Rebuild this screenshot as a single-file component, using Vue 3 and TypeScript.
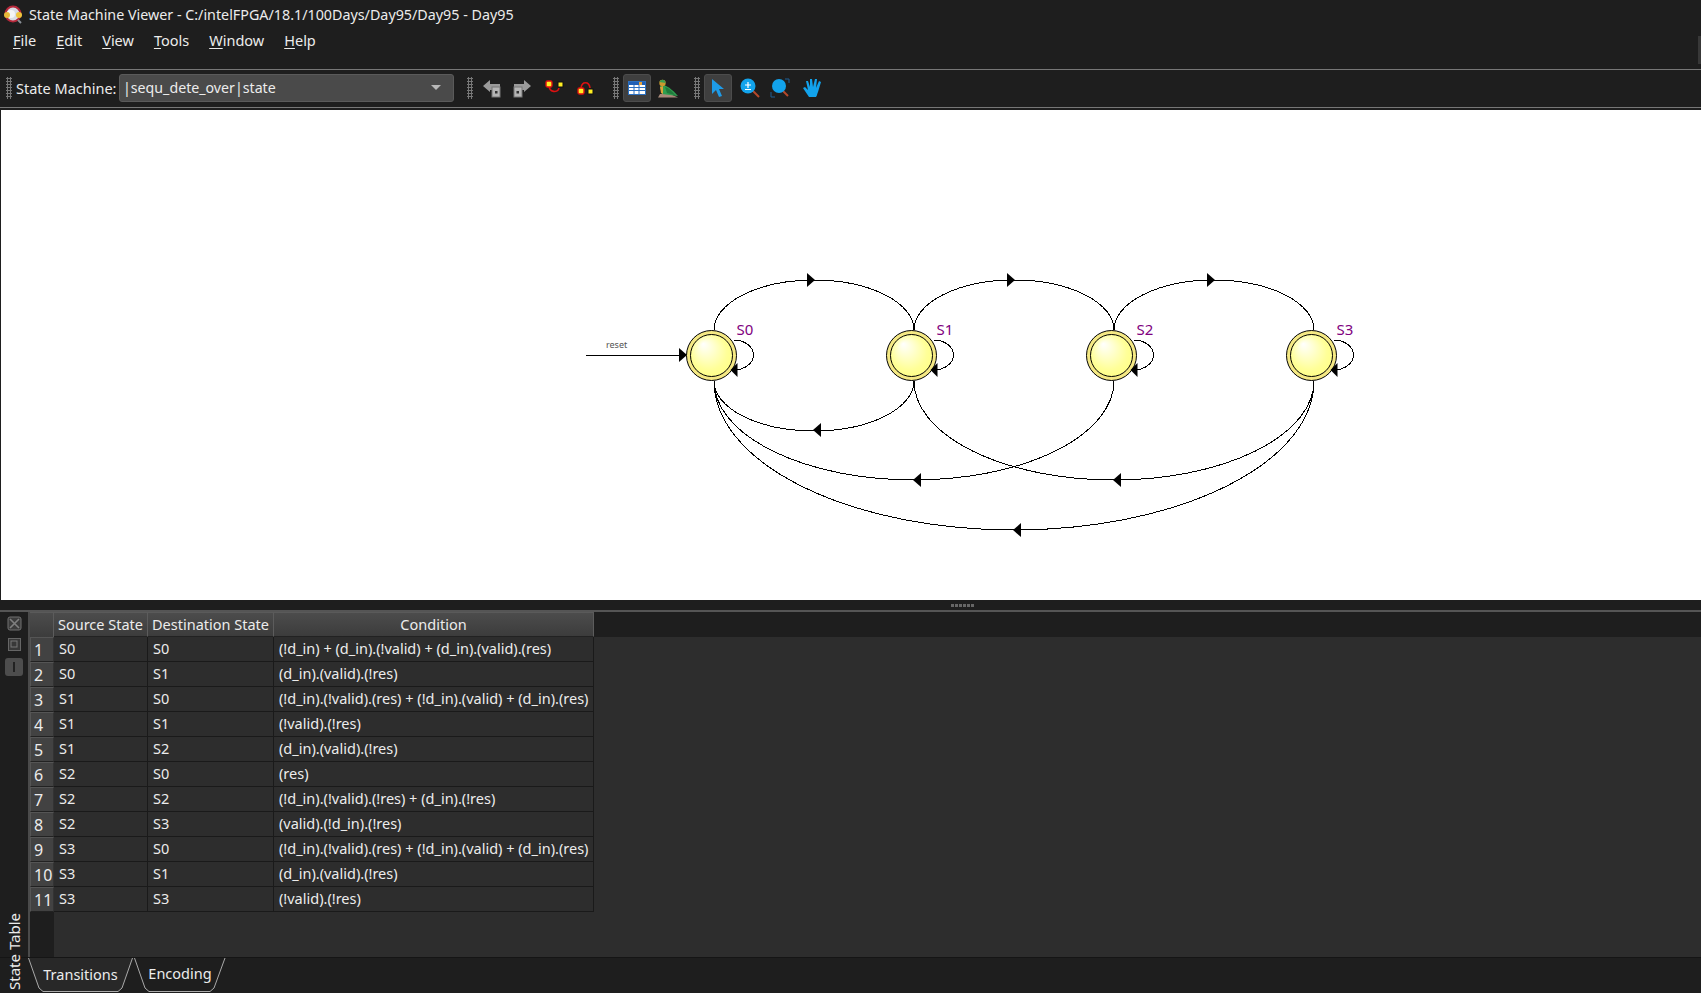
<template>
  <div class="viewer">
    <div class="titlebar">
      <svg class="app-icon" width="20" height="22" viewBox="0 0 20 22">
        <circle cx="11" cy="11" r="7.5" fill="#d8dce4" stroke="#b5283a" stroke-width="2" />
        <circle cx="9" cy="11" r="4" fill="#f4f4f4" />
        <circle cx="5" cy="12" r="3" fill="#e8b93a" />
        <circle cx="17" cy="12" r="3" fill="#f0c43c" />
        <path d="M16 17l3 3" stroke="#8a8f96" stroke-width="2" />
      </svg>
      <span>State Machine Viewer - C:/intelFPGA/18.1/100Days/Day95/Day95 - Day95</span>
    </div>

    <nav class="menubar">
      <span v-for="m in menus" :key="m" class="menu-item"><u>{{ m[0] }}</u>{{ m.slice(1) }}</span>
      <span class="menu-handle"></span>
    </nav>

    <div class="toolbar">
      <span class="grip first"></span>
      <span class="tb-label">State Machine:</span>
      <div class="combo">
        <span>|sequ_dete_over|state</span>
        <span class="combo-arrow"></span>
      </div>

      <span class="grip second"></span>
      <svg class="tool back" width="18" height="20" viewBox="0 0 18 20">
        <path d="M0 8L7 2v4h10v3H9v3H7v2z" fill="#9a9a9a" />
        <rect x="9" y="9" width="8" height="10" fill="#b5b5b5" stroke="#777" />
        <rect x="12" y="13" width="2.5" height="2.5" fill="#333" />
      </svg>
      <svg class="tool forward" width="18" height="20" viewBox="0 0 18 20">
        <path d="M18 8L11 2v4H1v3h8v3h2v2z" fill="#9a9a9a" />
        <rect x="1" y="9" width="8" height="10" fill="#b5b5b5" stroke="#777" />
        <rect x="3.5" y="13" width="2.5" height="2.5" fill="#333" />
      </svg>
      <svg class="tool loop-down" width="20" height="18" viewBox="0 0 20 18">
        <path d="M4 6c0 8 9 8 10 3" fill="none" stroke="#d11" stroke-width="1.6" />
        <rect x="1" y="2" width="6" height="6" rx="1.5" fill="#ffee22" stroke="#d11" stroke-width="1.4" />
        <rect x="13" y="3" width="5" height="5" fill="#ffee22" stroke="#111" />
      </svg>
      <svg class="tool loop-up" width="18" height="18" viewBox="0 0 18 18">
        <path d="M4 9c1-7 8-7 9 0" fill="none" stroke="#d11" stroke-width="1.6" />
        <rect x="1" y="9" width="6" height="6" rx="1.5" fill="#ffee22" stroke="#d11" stroke-width="1.4" />
        <rect x="11" y="10" width="5" height="5" fill="#ffee22" stroke="#111" />
      </svg>

      <span class="grip third"></span>
      <span class="tool-btn table-btn">
        <svg width="18" height="14" viewBox="0 0 18 14">
          <rect x="0.5" y="0.5" width="17" height="13" fill="#fff" stroke="#2a6fc0" />
          <rect x="1" y="1" width="16" height="3" fill="#1f5fb5" />
          <path d="M1 6.5h16M1 9.5h16" stroke="#2a6fc0" />
          <path d="M6 4v9M11 4v9" stroke="#2a6fc0" />
          <rect x="11" y="1" width="3" height="3" fill="#e8a23c" />
        </svg>
      </span>
      <svg class="tool bird" width="22" height="20" viewBox="0 0 22 20">
        <path d="M1 19.5L3 16h10l8 3.5z" fill="#a98a7a" />
        <path d="M3 8C6 5 13 9 21 18L5 16z" fill="#2f9e4f" />
        <path d="M3 9l3-1v8l-2-1z" fill="#d9a33a" />
        <circle cx="5.5" cy="5" r="3.2" fill="#c99a2e" />
        <path d="M2.5 4C4 1 8 1 8.5 5z" fill="#3aa050" />
        <path d="M8 9c4 1 7 4 10 8l-8-2z" fill="#1f7a3c" />
      </svg>

      <span class="grip fourth"></span>
      <span class="tool-btn pointer-btn">
        <svg width="14" height="18" viewBox="0 0 14 18">
          <path d="M1 0l12 10H8l3 7-3 1-3-7-4 4z" fill="#1e9be8" />
        </svg>
      </span>
      <svg class="tool zoom-in" width="20" height="20" viewBox="0 0 20 20">
        <path d="M12 12l7 7" stroke="#b5482a" stroke-width="2" />
        <circle cx="8" cy="8" r="7.5" fill="#12a3ec" />
        <path d="M8 4v6M5 7h6M5 11.5h6" stroke="#fff" stroke-width="1.2" />
      </svg>
      <svg class="tool zoom-fit" width="20" height="20" viewBox="0 0 20 20">
        <path d="M12 12l6 6" stroke="#b5482a" stroke-width="2" />
        <circle cx="9" cy="8" r="7" fill="#12a3ec" />
        <path d="M15 1h4v4M1 14v5h4" fill="none" stroke="#1f5f94" />
      </svg>
      <svg class="tool hand" width="20" height="20" viewBox="0 0 20 20">
        <path d="M6 19C4 16 2 13 0 10l2-1 3 3L3 3h2l2 6V1h2l1 8 2-8h2l-1 9 3-7 2 1-3 10c-1 2-1 4-2 5z" fill="#12a3ec" />
      </svg>
    </div>

    <div class="canvas">
      <svg class="diagram" width="1700" height="490" viewBox="1 110 1700 490">
        <defs>
          <radialGradient id="ball" cx="0.5" cy="0.5" r="0.6" fx="0.3" fy="0.22">
            <stop offset="0" stop-color="#ffffff" />
            <stop offset="0.7" stop-color="#ffff99" />
            <stop offset="1" stop-color="#ffff80" />
          </radialGradient>
        </defs>

        <g fill="none" stroke="#000" stroke-width="1">
          <path v-for="a in arcs" :key="a" :d="a" />
          <path d="M586 355H680" />
        </g>

        <polygon
          v-for="t in arrows"
          :key="t.join()"
          :points="arrowPoints(t[0], t[1], t[2])"
          fill="#000"
        />
        <polygon points="679,348 687,355 679,362" fill="#000" />

        <g v-for="s in states" :key="s.name">
          <circle :cx="s.x" cy="355.5" r="25" fill="#f5e984" stroke="#000" />
          <circle :cx="s.x" cy="355.5" r="21" fill="url(#ball)" stroke="#000" />
          <path
            :d="`M${s.x + 22} 340 A20 15 0 0 1 ${s.x + 22} 370`"
            fill="none"
            stroke="#000"
          />
          <polygon
            :points="`${s.x + 19},370 ${s.x + 26},363 ${s.x + 26},377`"
            fill="#000"
          />
          <text :x="s.x + 25" y="335" class="state-name">{{ s.name }}</text>
        </g>

        <text x="606" y="348" class="reset">reset</text>
      </svg>
    </div>

    <div class="splitter"><span v-for="n in 6" :key="n"></span></div>

    <div class="panel">
      <aside class="rail">
        <svg width="15" height="15" viewBox="0 0 15 15" class="rail-icon">
          <rect x="1" y="1" width="13" height="13" rx="2" fill="#3c3c3c" stroke="#707070" />
          <path d="M3 3l9 9M12 3l-9 9" stroke="#808080" stroke-width="1.6" />
        </svg>
        <svg width="15" height="15" viewBox="0 0 15 15" class="rail-icon">
          <rect x="1.5" y="1.5" width="12" height="12" fill="#383838" stroke="#666" />
          <rect x="4" y="4" width="6" height="6" fill="none" stroke="#777" />
        </svg>
        <span class="rail-pin"><i></i></span>
        <span class="rail-title">State Table</span>
      </aside>

      <section class="sheet">
        <div class="head">
          <span class="corner"></span>
          <span class="hcell src">Source State</span>
          <span class="hcell dst">Destination State</span>
          <span class="hcell cond">Condition</span>
        </div>
        <div class="body">
          <div class="row-heads">
            <span v-for="(r, i) in rows" :key="i" class="row-no">{{ i + 1 }}</span>
          </div>
          <div class="cells">
            <div v-for="(r, i) in rows" :key="i" class="row">
              <span class="cell src">{{ r[0] }}</span>
              <span class="cell dst">{{ r[1] }}</span>
              <span class="cell cond">{{ r[2] }}</span>
            </div>
          </div>
        </div>
      </section>
    </div>

    <div class="tabs">
      <div class="tab transitions">
        <svg width="105" height="35" viewBox="0 0 105 35">
          <path d="M0.5 0L11 30l4 3.5H90l4-3.5L104.5 0" fill="#282828" stroke="#aaa" />
        </svg>
        <span>Transitions</span>
      </div>
      <div class="tab encoding">
        <svg width="92" height="35" viewBox="0 0 92 35">
          <path d="M0.5 0L11 30l4 3.5H76l4-3.5L91 0" fill="#1e1e1e" stroke="#aaa" />
        </svg>
        <span>Encoding</span>
      </div>
    </div>
  </div>
</template>

<script setup lang="ts">
const menus = ['File', 'Edit', 'View', 'Tools', 'Window', 'Help']

const states = [
  { name: 'S0', x: 711.5 },
  { name: 'S1', x: 911.5 },
  { name: 'S2', x: 1111.5 },
  { name: 'S3', x: 1311.5 },
]

const arcs = [
  'M714 330A100 50 0 0 1 914 330',
  'M914 330A100 50 0 0 1 1114 330',
  'M1114 330A100 50 0 0 1 1314 330',
  'M914 381A100 50 0 0 1 714 381',
  'M1114 381A200 99 0 0 1 714 381',
  'M1314 381A200 99 0 0 1 914 381',
  'M1314 381A300 149 0 0 1 714 381',
]

// base x, tip x, y
const arrows: [number, number, number][] = [
  [807, 815, 280],
  [1007, 1015, 280],
  [1207, 1215, 280],
  [821, 813, 430],
  [921, 913, 480],
  [1121, 1113, 480],
  [1021, 1013, 530],
]

const arrowPoints = (base: number, tip: number, y: number) =>
  `${base},${y - 7} ${tip},${y} ${base},${y + 7}`

const rows = [
  ['S0', 'S0', '(!d_in) + (d_in).(!valid) + (d_in).(valid).(res)'],
  ['S0', 'S1', '(d_in).(valid).(!res)'],
  ['S1', 'S0', '(!d_in).(!valid).(res) + (!d_in).(valid) + (d_in).(res)'],
  ['S1', 'S1', '(!valid).(!res)'],
  ['S1', 'S2', '(d_in).(valid).(!res)'],
  ['S2', 'S0', '(res)'],
  ['S2', 'S2', '(!d_in).(!valid).(!res) + (d_in).(!res)'],
  ['S2', 'S3', '(valid).(!d_in).(!res)'],
  ['S3', 'S0', '(!d_in).(!valid).(res) + (!d_in).(valid) + (d_in).(res)'],
  ['S3', 'S1', '(d_in).(valid).(!res)'],
  ['S3', 'S3', '(!valid).(!res)'],
]
</script>

<style>
html,
body {
  margin: 0;
  background: #1e1e1e;
}
</style>

<style scoped>
.viewer {
  width: 1701px;
  height: 993px;
  display: flex;
  flex-direction: column;
  overflow: hidden;
  background: #1e1e1e;
  color: #ececec;
  font-family: 'Noto Sans', 'Open Sans', sans-serif;
  font-size: 14.5px;
}

.titlebar {
  height: 30px;
  display: flex;
  align-items: center;
  padding-left: 2px;
  gap: 7px;
  box-sizing: border-box;
  padding-bottom: 2px;
  font-size: 14.3px;
}

.menubar {
  height: 40px;
  box-sizing: border-box;
  display: flex;
  gap: 20px;
  padding: 0 0 19px 13px;
  align-items: center;
  position: relative;
  border-bottom: 1px solid #777;
}

.menu-item u {
  text-underline-offset: 2px;
}

.menu-handle {
  margin-left: auto;
  width: 3px;
  height: 28px;
  margin-top: 19px;
  background: #383838;
}

.toolbar {
  height: 38px;
  box-sizing: border-box;
  display: flex;
  align-items: center;
  padding-bottom: 2px;
  border-bottom: 1px solid #777;
}

.grip {
  width: 6px;
  height: 22px;
  flex: none;
  background-image: radial-gradient(#777 1px, transparent 1.2px);
  background-size: 3px 3px;
}

.grip.first {
  margin-left: 6px;
}

.tb-label {
  margin-left: 4px;
  width: 100px;
  white-space: nowrap;
}

.combo {
  width: 335px;
  height: 28px;
  box-sizing: border-box;
  margin-left: 3px;
  padding: 0 12px 0 3px;
  display: flex;
  align-items: center;
  justify-content: space-between;
  background: #4a4a4a;
  border: 1px solid #5a5a5a;
  border-radius: 3px;
  font-size: 14.2px;
}

.combo-arrow {
  width: 0;
  height: 0;
  border-left: 5px solid transparent;
  border-right: 5px solid transparent;
  border-top: 5px solid #b8b8b8;
}

.grip.second {
  margin-left: 13px;
}

.tool {
  flex: none;
}

.back {
  margin-left: 10px;
}

.forward {
  margin-left: 12px;
}

.loop-down {
  margin-left: 14px;
}

.loop-up {
  margin-left: 12px;
}

.grip.third {
  margin-left: 18px;
}

.tool-btn {
  width: 28px;
  height: 28px;
  box-sizing: border-box;
  display: flex;
  align-items: center;
  justify-content: center;
  flex: none;
  background: #3f3f3f;
  border: 1px solid #4c4c4c;
  border-radius: 3px;
}

.table-btn {
  margin-left: 4px;
}

.bird {
  margin-left: 6px;
}

.grip.fourth {
  margin-left: 15px;
}

.pointer-btn {
  margin-left: 4px;
}

.zoom-in {
  margin-left: 8px;
}

.zoom-fit {
  margin-left: 10px;
}

.hand {
  margin-left: 13px;
}

.canvas {
  height: 490px;
  margin-top: 2px;
  margin-left: 1px;
  background: #fff;
  flex: none;
}

.diagram {
  display: block;
  shape-rendering: crispEdges;
}

.diagram polygon {
  shape-rendering: geometricPrecision;
}

.diagram circle {
  shape-rendering: geometricPrecision;
}

.state-name {
  fill: #800080;
  font-size: 15px;
}

.reset {
  fill: #555;
  font-size: 9px;
}

.splitter {
  height: 12px;
  flex: none;
  display: flex;
  gap: 1px;
  justify-content: center;
  align-items: center;
  box-sizing: border-box;
  border-bottom: 2px solid #555;
  padding: 0 0 0 223px;
}

.splitter span {
  width: 3px;
  height: 3px;
  background: #666;
}

.panel {
  flex: 1;
  min-height: 0;
  display: flex;
}

.rail {
  width: 28px;
  flex: none;
  display: flex;
  flex-direction: column;
  align-items: center;
  padding-top: 4px;
  gap: 6px;
  border-right: 2px solid #4a4a4a;
  box-sizing: content-box;
}

.rail-pin {
  width: 18px;
  height: 18px;
  box-sizing: border-box;
  background: #4d4d4d;
  border-radius: 3px;
  display: flex;
  align-items: center;
  justify-content: center;
}

.rail-pin i {
  width: 2px;
  height: 10px;
  background: #222;
}

.rail-title {
  margin-top: auto;
  writing-mode: vertical-rl;
  transform: rotate(180deg);
  line-height: 20px;
  padding-top: 3px;
  margin-bottom: -36px;
  position: relative;
  font-size: 15px;
}

.sheet {
  flex: 1;
  min-width: 0;
  display: flex;
  flex-direction: column;
  background: #2d2d2d;
}

.head {
  height: 25px;
  display: flex;
  flex: none;
  background: #1e1e1e;
}

.corner {
  width: 24px;
  background: linear-gradient(#4c4c4c, #3c3c3c);
  border-top: 1px solid #5a5a5a;
  border-right: 1px solid #5c5c5c;
  box-sizing: border-box;
}

.hcell {
  box-sizing: border-box;
  background: linear-gradient(#4c4c4c, #3c3c3c);
  border-right: 1px solid #5c5c5c;
  border-top: 1px solid #5a5a5a;
  border-bottom: 1px solid #222;
  display: flex;
  align-items: center;
  justify-content: center;
  white-space: nowrap;
  padding-bottom: 2px;
}

.src {
  width: 94px;
}

.dst {
  width: 126px;
}

.cond {
  width: 320px;
}

.body {
  flex: 1;
  display: flex;
  min-height: 0;
}

.row-heads {
  width: 24px;
  flex: none;
  background: #1e1e1e;
  display: flex;
  flex-direction: column;
}

.row-no {
  height: 25px;
  box-sizing: border-box;
  background: #424242;
  border: 1px solid #555;
  border-right-color: #333;
  border-bottom-color: #222;
  display: flex;
  align-items: center;
  padding-left: 3px;
  font-size: 16px;
}

.row {
  height: 25px;
  display: flex;
  box-sizing: border-box;
}

.cell {
  box-sizing: border-box;
  height: 25px;
  padding: 0 0 2px 5px;
  border-right: 1px solid #1a1a1a;
  border-bottom: 1px solid #1a1a1a;
  display: flex;
  align-items: center;
  white-space: nowrap;
}

.tabs {
  height: 36px;
  flex: none;
  display: flex;
  padding-left: 28px;
  border-top: 1px solid #151515;
  box-sizing: border-box;
  gap: 1px;
}

.tab {
  position: relative;
  height: 35px;
  flex: none;
}

.tab svg {
  position: absolute;
  left: 0;
  top: 0;
}

.tab span {
  position: relative;
  display: block;
}

.transitions {
  width: 105px;
  text-align: center;
  line-height: 32px;
}

.encoding {
  width: 92px;
  text-align: center;
  line-height: 30px;
}
</style>
